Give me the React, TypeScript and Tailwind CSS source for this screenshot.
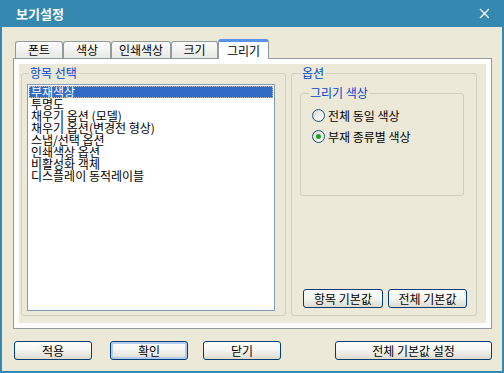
import type { ReactNode } from 'react';

const items = [
  "부재색상",
  "투명도",
  "채우기 옵션 (모델)",
  "채우기 옵션(변경전 형상)",
  "스냅/선택 옵션",
  "인쇄색상 옵션",
  "비활성화 객체",
  "디스플레이 동적레이블",
];

const tabs = [
  { label: "폰트", w: "w-[48px]" },
  { label: "색상", w: "w-[48px]" },
  { label: "인쇄색상", w: "w-[60px]" },
  { label: "크기", w: "w-[47px]" },
];

function XpButton({ children, className = "", isDefault = false }: { children: ReactNode; className?: string; isDefault?: boolean }) {
  return (
    <button
      className={`h-[19px] rounded-[3px] border border-[#003c74] bg-linear-to-b from-white via-[#f4f4f0] to-[#dcdcd2] text-[12px] leading-none text-black ${
        isDefault ? "shadow-[inset_0_0_0_2px_#b2cbf3]" : ""
      } ${className}`}
    >
      {children}
    </button>
  );
}

function GroupBox({ title, className = "", titleLeft = "left-[7px]", children }: { title: string; className?: string; titleLeft?: string; children: ReactNode }) {
  return (
    <div className={`relative rounded-[3px] border border-[#d0d0bf] ${className}`}>
      <span className={`absolute top-[-8px] ${titleLeft} bg-[#ece9d8] px-px text-[12px] leading-[14px] text-[#0046d5]`}>
        {title}
      </span>
      {children}
    </div>
  );
}

function Radio({ checked, label }: { checked?: boolean; label: string }) {
  return (
    <div className="flex items-center gap-[3px]">
      <div className="flex h-[13px] w-[13px] items-center justify-center rounded-full border border-[#1c5180] bg-linear-to-br from-[#dcdcd5] to-white">
        {checked && <div className="h-[5px] w-[5px] rounded-full bg-[#21a121]" />}
      </div>
      <span className="text-[12px] leading-none">{label}</span>
    </div>
  );
}

export default function App() {
  return (
    <div className="flex h-[373px] w-[504px] flex-col bg-[#3589b0] px-[2px] pb-[2px] font-['Noto_Sans_CJK_KR',sans-serif] text-black">
      {/* title bar */}
      <div className="flex h-[27px] items-center justify-between pl-[14px] pr-[12px]">
        <span className="text-[13px] font-bold leading-none text-white">보기설정</span>
        <svg width="11" height="11" viewBox="0 0 11 11" className="text-white">
          <path d="M1 1 L10 10 M10 1 L1 10" stroke="currentColor" strokeWidth="1.3" />
        </svg>
      </div>

      {/* body */}
      <div className="flex flex-1 flex-col bg-[#ece9d8] pl-[11px] pt-[12px]">
        {/* tabs */}
        <div className="flex h-[19px] items-end pl-[2px]">
          {tabs.map((t) => (
            <div
              key={t.label}
              className={`${t.w} flex h-[17px] items-center justify-center rounded-t-[3px] border border-b-0 border-[#919b9c] bg-linear-to-b from-[#fcfcfe] to-[#e8e8e4] text-[12px] leading-none`}
            >
              {t.label}
            </div>
          ))}
          <div className="relative z-10 -mb-px flex h-[20px] w-[51px] items-center justify-center rounded-t-[3px] border border-b-0 border-[#919b9c] border-t-[3px] border-t-[#5a94e8] bg-white text-[12px] leading-none">
            그리기
          </div>
        </div>

        {/* panel */}
        <div className="h-[271px] w-[479px] border border-[#919b9c] bg-white p-[5px]">
          <div className="flex h-full gap-[5px] bg-[#ece9d8] pl-[2px] pt-[9px]">
            <GroupBox title="항목 선택" className="h-[243px] w-[265px] pl-[5px] pt-[10px]" titleLeft="left-[7px]">
              <div className="h-[227px] w-[248px] border border-[#7f9db9] bg-white p-px">
                {items.map((it, i) => (
                  <div
                    key={it}
                    className={`h-[12px] whitespace-nowrap pl-[2px] text-[12px] leading-[12px] ${
                      i === 0 ? "bg-[#316ac5] text-white outline outline-1 outline-dotted outline-[#c0c0c0] -outline-offset-1" : ""
                    }`}
                  >
                    {it}
                  </div>
                ))}
              </div>
            </GroupBox>

            <GroupBox title="옵션" className="flex h-[243px] w-[186px] flex-col pl-[8px] pt-[19px]" titleLeft="left-[9px]">
              <GroupBox title="그리기 색상" className="h-[103px] w-[164px] pl-[11px] pt-[15px]" titleLeft="left-[8px]">
                <div className="flex flex-col gap-[8px]">
                  <Radio label="전체 동일 색상" />
                  <Radio checked label="부재 종류별 색상" />
                </div>
              </GroupBox>
              <div className="mt-[93px] flex gap-[5px] pl-[3px]">
                <XpButton className="w-[80px]">항목 기본값</XpButton>
                <XpButton className="w-[79px]">전체 기본값</XpButton>
              </div>
            </GroupBox>
          </div>
        </div>

        {/* bottom buttons */}
        <div className="mt-[12px] flex pl-px">
          <XpButton className="w-[78px]">적용</XpButton>
          <XpButton isDefault className="ml-[18px] w-[78px]">확인</XpButton>
          <XpButton className="ml-[15px] w-[78px]">닫기</XpButton>
          <XpButton className="ml-[54px] w-[157px]">전체 기본값 설정</XpButton>
        </div>
      </div>
    </div>
  );
}
